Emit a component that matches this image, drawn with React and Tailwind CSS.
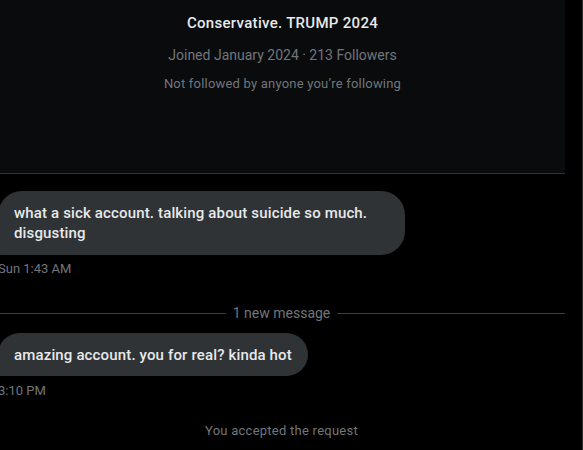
export default function App() {
  return (
    <div className="w-[583px] h-[450px] bg-black overflow-hidden flex font-['Roboto','Noto_Sans',sans-serif]">
      <div className="w-[565px] shrink-0 flex flex-col">
        {/* profile header */}
        <div className="h-[174px] bg-[#0a0b0d] border-b border-[#2f3336] flex flex-col items-center pt-[13px]">
          <p className="text-[15px] leading-5 font-medium tracking-[0.3px] text-[#e7e9ea]">Conservative. TRUMP 2024</p>
          <p className="mt-3 text-[14px] leading-5 text-[#71767b]">Joined January 2024 · 213 Followers</p>
          <p className="mt-[11px] text-[13px] leading-4 tracking-[0.2px] text-[#71767b]">Not followed by anyone you’re following</p>
        </div>

        {/* messages */}
        <div className="-ml-[2px] flex flex-col">
          <div className="mt-[17px] w-[407px] bg-[#2f3336] rounded-3xl rounded-bl-[4px] px-4 py-3 text-[15px] leading-5 font-medium tracking-[0.15px] text-[#e7e9ea]">
            what a sick account. talking about suicide so much. disgusting
          </div>
          <p className="mt-[6px] text-[13px] leading-4 text-[#71767b]">Sun 1:43 AM</p>

          <div className="mt-[26px] h-5 flex items-center gap-[7px]">
            <div className="flex-1 h-px bg-[#3a3e41]" />
            <span className="text-[14px] leading-5 text-[#71767b]">1 new message</span>
            <div className="flex-1 h-px bg-[#3a3e41]" />
          </div>

          <div className="mt-[10px] w-fit bg-[#2f3336] rounded-3xl rounded-bl-[4px] px-4 pt-3 pb-[11px] text-[15px] leading-5 font-medium tracking-[0.15px] text-[#e7e9ea]">
            amazing account. you for real? kinda hot
          </div>
          <p className="mt-[7px] text-[13px] leading-4 text-[#71767b]">3:10 PM</p>

          <p className="mt-6 text-center text-[13px] leading-4 tracking-[0.25px] text-[#71767b]">You accepted the request</p>
        </div>
      </div>
      <div className="flex-1" />
      <div className="w-px bg-[#2f3336]" />
    </div>
  );
}
